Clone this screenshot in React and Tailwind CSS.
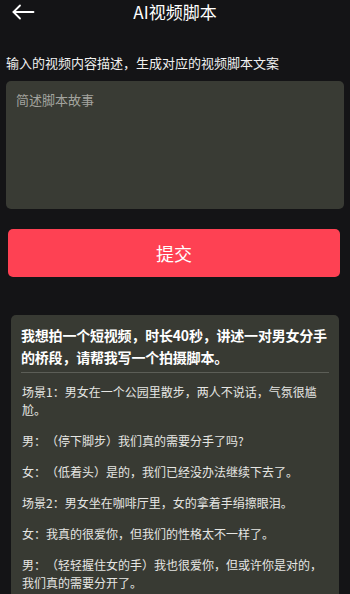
import React from "react";

const font = { fontFamily: '"Noto Sans CJK SC", "Noto Sans", sans-serif' };

const paras = [
  "场景1：男女在一个公园里散步，两人不说话，气氛很尴尬。",
  "男：（停下脚步）我们真的需要分手了吗?",
  "女：（低着头）是的，我们已经没办法继续下去了。",
  "场景2：男女坐在咖啡厅里，女的拿着手绢擦眼泪。",
  "女：我真的很爱你，但我们的性格太不一样了。",
  "男：（轻轻握住女的手）我也很爱你，但或许你是对的，我们真的需要分开了。",
  "场景3：男女各自走在街上，回忆起曾经在一起的时光。",
];

export default function App() {
  return (
    <div className="min-h-screen w-[350px] overflow-hidden bg-[#141416] text-white [text-spacing-trim:space-all]" style={font}>
      <div className="grid h-[24px] grid-cols-[60px_1fr_60px] items-center">
        <div className="pl-[12px]">
          <svg width="23" height="16" viewBox="0 0 23 16" fill="none" stroke="white" strokeWidth="1.8" strokeLinecap="round" strokeLinejoin="round">
            <path d="M1.5 8H21.5" />
            <path d="M8 1.5L1.5 8L8 14.5" />
          </svg>
        </div>
        <div className="text-center text-[17px] leading-[24px]">AI视频脚本</div>
        <div />
      </div>

      <p className="mt-[30px] px-[6px] text-[13px] leading-[18px] text-[#f0f0f0]">
        输入的视频内容描述，生成对应的视频脚本文案
      </p>

      <div className="mx-[6px] mt-[9px] h-[128px] rounded-[5px] bg-[#393b34] px-[10px] pt-[9px] text-[13px] leading-[20px] text-[#a3a49f]">
        简述脚本故事
      </div>

      <button className="mx-[8px] mt-[20px] flex h-[48px] w-[332px] items-center justify-center rounded-[5px] bg-[#fe4153] text-[18px] text-white">
        提交
      </button>

      <div className="mx-[11px] mt-[38px] rounded-[5px] bg-[#383a33] px-[10px] pb-[12px] pt-[9px]">
        <p className="text-[14px] font-bold leading-[22px] tracking-[-0.2px] text-white">
          我想拍一个短视频，时长40秒，讲述一对男女分手的桥段，请帮我写一个拍摄脚本。
        </p>
        <div className="mt-[4px] h-px bg-[#5c5e57]" />
        <div className="mt-[10px] flex flex-col gap-[13px] pl-px text-[12px] leading-[18px] text-[#e6e6e3]">
          {paras.map((p, i) => (
            <p key={i}>{p}</p>
          ))}
        </div>
      </div>
    </div>
  );
}
